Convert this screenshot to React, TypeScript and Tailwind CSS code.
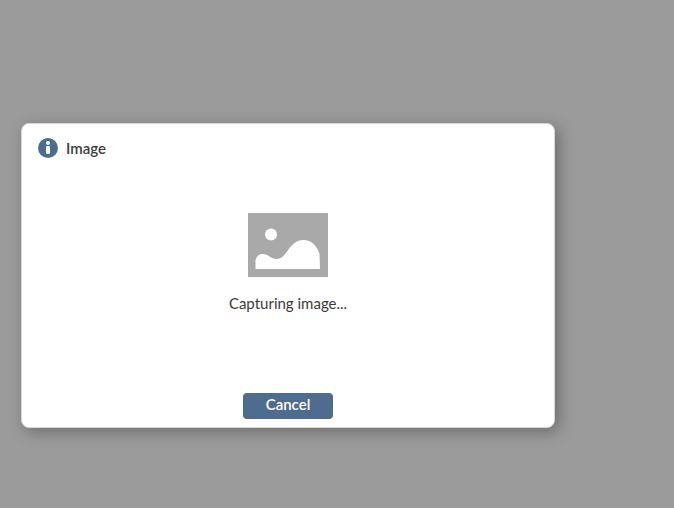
export default function App() {
  return (
    <main className="min-h-screen bg-[#9b9b9b] px-[21px] pt-[123px] pb-8 font-['Lato',sans-serif] text-[15px] leading-5 text-[#3b3b3b]">
      <section
        role="dialog"
        aria-labelledby="dialog-title"
        className="flex w-full max-w-[534px] flex-col rounded-lg border border-[#d5d8d8] bg-white px-4 pt-3.5 pb-2 shadow-[4px_4px_16px_rgba(0,0,0,0.3)]"
      >
        <header className="flex items-center gap-2">
          <svg viewBox="0 0 20 20" className="size-5" aria-hidden="true">
            <circle cx="10" cy="10" r="10" fill="#4e6c8d" />
            <circle cx="10" cy="5" r="2" fill="white" />
            <rect x="8" y="8" width="4" height="8" rx="1.2" fill="white" />
          </svg>
          <h1 id="dialog-title" className="font-semibold">Image</h1>
        </header>
        <div className="flex flex-col items-center gap-4 pt-[55px] pb-20">
          <svg viewBox="0 0 80 64" className="h-16 w-20" aria-hidden="true">
            <path d="M0 0H80V64H0Z" fill="#a9a9a9" />
            <circle cx="23" cy="21.5" r="6" fill="white" />
            <path
              d="M7.5 56V47C8.5 43 11 41 15 41C20 41 23 46 29 46C39 46 41 27 55 27C64 27 69 33 71.5 41L72 56Z"
              fill="white"
            />
          </svg>
          <p>Capturing image...</p>
        </div>
        <button
          type="button"
          className="h-[26px] w-[90px] self-center rounded bg-[#4e6c8d] pb-1 font-semibold text-white"
        >
          Cancel
        </button>
      </section>
    </main>
  );
}
